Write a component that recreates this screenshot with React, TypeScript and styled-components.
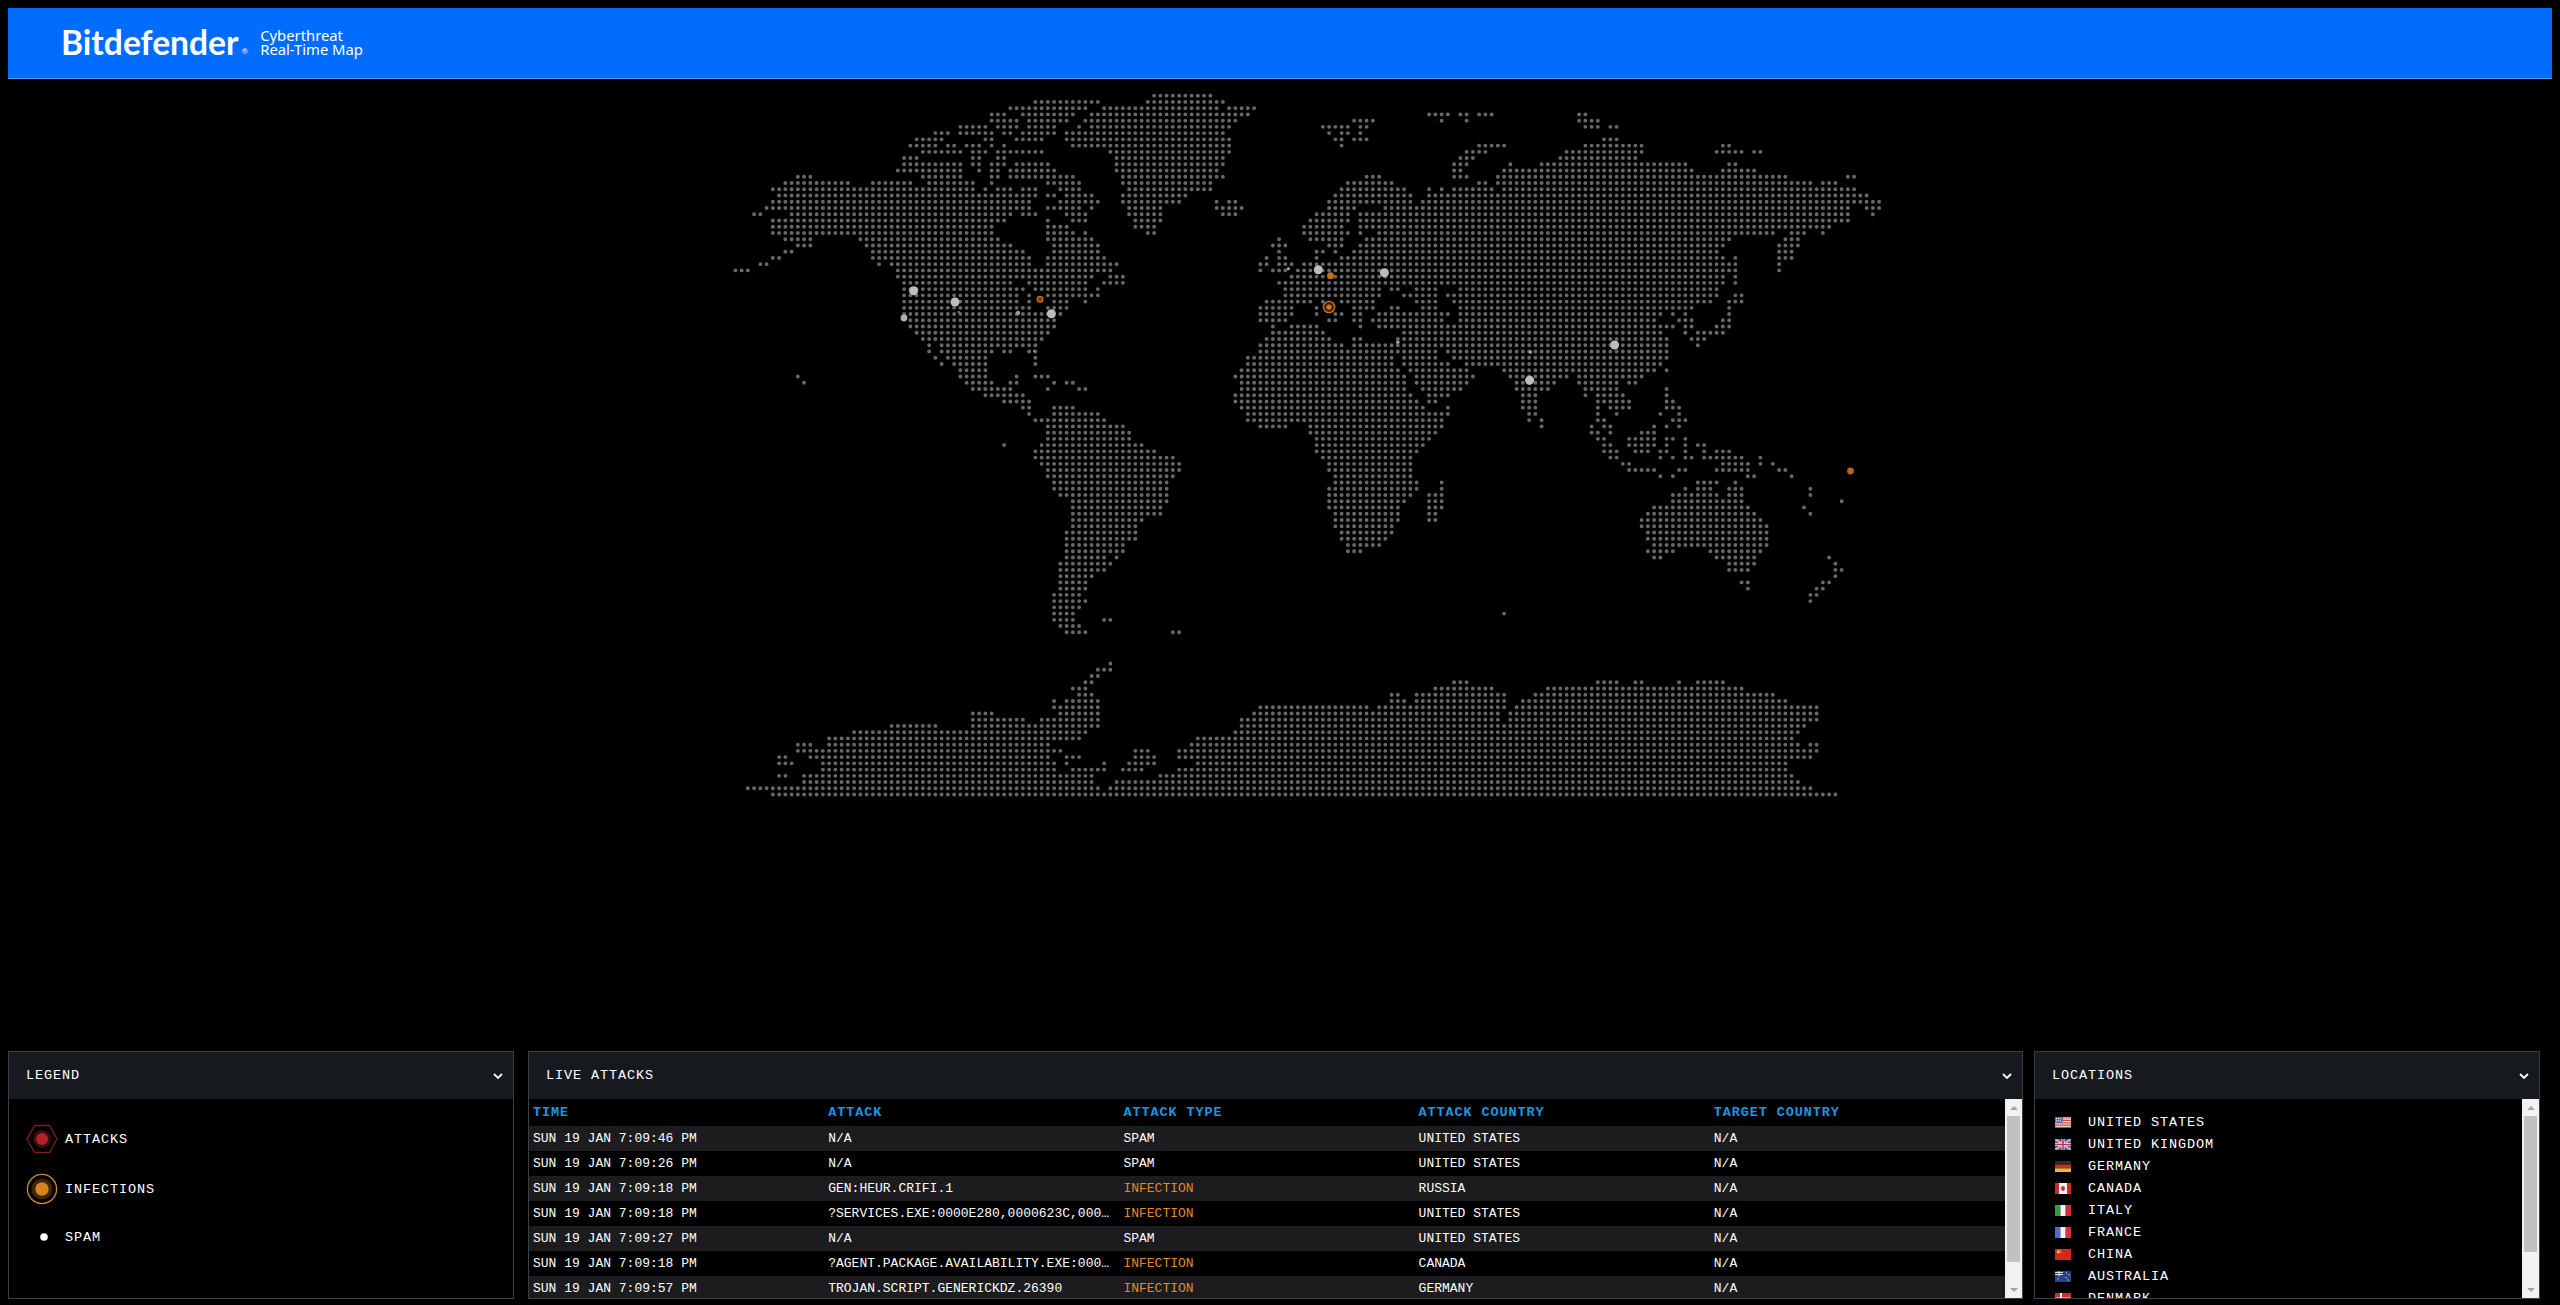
import React from "react";
import styled, { createGlobalStyle } from "styled-components";

const GlobalStyle = createGlobalStyle`
  html, body { margin: 0; padding: 0; background: #000; overflow: hidden; }
  #root { height: 1305px; }
`;

const Page = styled.div`
  box-sizing: border-box;
  height: 1305px;
  padding: 8px 8px 6px;
  display: flex;
  flex-direction: column;
  background: #000;
  color: #fff;
  font-family: "Liberation Mono", "Courier New", monospace;
`;

const TopBar = styled.header`
  flex: none;
  box-sizing: border-box;
  height: 71px;
  background: #006dff;
  border-bottom: 1px solid #4c97ff;
  display: flex;
  align-items: center;
  padding-left: 53px;
  padding-bottom: 2px;
`;

const Wordmark = styled.div`
  display: flex;
  align-items: flex-end;
  font-family: Lato, "Open Sans", sans-serif;
  font-weight: 700;
  font-size: 33.6px;
  line-height: 36px;
`;

const Registered = styled.span`
  font-size: 8px;
  line-height: 12px;
  font-weight: 400;
  margin-left: 3px;
  margin-bottom: 3px;
`;

const Tagline = styled.div`
  margin-left: 12px;
  font-family: "Noto Sans", sans-serif;
  font-size: 14.8px;
  line-height: 14.5px;
  font-weight: 400;
`;

const MapArea = styled.main`
  flex: 1;
  min-height: 0;
  padding: 9px 0 0 720px;
`;

const MapSvg = styled.svg`
  display: block;
`;

const Panels = styled.section`
  flex: none;
  height: 248px;
  display: flex;
`;

const Panel = styled.div<{ $width: number; $gap?: number }>`
  flex: none;
  box-sizing: border-box;
  width: ${(p) => p.$width}px;
  margin-left: ${(p) => p.$gap ?? 0}px;
  height: 248px;
  border: 1px solid #3b4048;
  display: flex;
  flex-direction: column;
  overflow: hidden;
`;

const PanelHead = styled.div`
  flex: none;
  height: 47px;
  box-sizing: border-box;
  background: #161a1f;
  display: flex;
  align-items: center;
  justify-content: space-between;
  padding: 0 10px 0 17px;
  font-size: 13.5px;
  letter-spacing: 0.9px;
`;

const Body = styled.div`
  flex: 1;
  min-height: 0;
  display: flex;
  overflow: hidden;
`;

const Content = styled.div`
  flex: 1;
  min-width: 0;
  overflow: hidden;
`;

const Rail = styled.div`
  flex: none;
  width: 17px;
  background: #f1f1f1;
  display: flex;
  flex-direction: column;
`;

const RailArrow = styled.div<{ $down?: boolean }>`
  flex: none;
  height: 17px;
  display: flex;
  align-items: center;
  justify-content: center;
  &::before {
    content: "";
    width: 0;
    height: 0;
    border-left: 4px solid transparent;
    border-right: 4px solid transparent;
    ${(p) => (p.$down ? "border-top: 4px solid #a3a3a3;" : "border-bottom: 4px solid #a3a3a3;")}
  }
`;

const RailTrack = styled.div`
  flex: 1;
  min-height: 0;
`;

const RailThumb = styled.div<{ $height: number }>`
  height: ${(p) => p.$height}px;
  margin: 0 2px;
  background: #c1c1c1;
`;

const LegendList = styled.div`
  flex: 1;
  display: grid;
  grid-template-rows: 50px 50px 46px;
  padding-top: 15px;
  box-sizing: border-box;
`;

const LegendRow = styled.div`
  display: flex;
  align-items: center;
  font-size: 13.5px;
  letter-spacing: 0.9px;
`;

const LegendIcon = styled.svg`
  display: block;
  margin: 0 7px 0 17px;
  flex: none;
`;

const TableRow = styled.div<{ $stripe?: boolean; $head?: boolean }>`
  display: grid;
  grid-template-columns: repeat(5, 1fr);
  height: ${(p) => (p.$head ? 27 : 25)}px;
  align-items: center;
  background: ${(p) => (p.$stripe ? "#1c1c1f" : "#000")};
  color: ${(p) => (p.$head ? "#1b96e6" : "#fff")};
  font-size: ${(p) => (p.$head ? 13.5 : 13)}px;
  letter-spacing: ${(p) => (p.$head ? "0.9px" : "0")};
  font-weight: ${(p) => (p.$head ? 700 : 400)};
`;

const Cell = styled.div<{ $tone?: "infection" }>`
  padding-left: 4px;
  white-space: nowrap;
  color: ${(p) => (p.$tone === "infection" ? "#e08a2c" : "inherit")};
`;

const LocationList = styled.ul`
  list-style: none;
  margin: 0;
  padding: 12px 0;
`;

const LocationItem = styled.li`
  height: 22px;
  display: flex;
  align-items: center;
  padding-left: 20px;
  font-size: 13.5px;
  letter-spacing: 0.9px;
`;

const Flag = styled.svg`
  display: block;
  flex: none;
  margin-right: 17px;
`;

const Chevron = () => (
  <svg width="10" height="8" viewBox="0 0 10 8" fill="none" stroke="#fff" strokeWidth="1.8">
    <path d="M1 2 L5 6 L9 2" />
  </svg>
);

const ScrollRail = ({ thumb }: { thumb: number }) => (
  <Rail>
    <RailArrow />
    <RailTrack>
      <RailThumb $height={thumb} />
    </RailTrack>
    <RailArrow $down />
  </Rail>
);

const RAW = `67-76
48-58 66-78
44-56 59-77 79-83
41-43 46-54 57-82 111-114 116-117 119-121 135-136
41-45 47-53 56-80 99-102 113 117 135-138
36-40 42-45 47-51 55 57-79 94-98 100-101 136-138 140-141
32-34 36-41 43-44 46-51 53-78 95 97-98 100
29-33 40-41 45-49 53-79 96-97 99-101 139-141
28-32 34-35 37-39 41 43 54-79 97 119-123 136-145 158-159
30-36 38-40 42-49 60-79 117-120 133-145 157-161 163-164
27-29 38-39 42-43 61-78 116-118 132-144
27-36 38-39 41-43 45-50 61-78 115-117 124 129-152 159-160
26-36 39 41-42 44-51 61-77 115-116 123-153 158-163
10-12 30-36 41-42 44-54 62-78 101-103 115-117 122-168 178-179
8-18 22-28 31-38 41 50-55 62-76 98-105 119-120 122-172 174-176
6-38 40 42-44 46-48 52-55 63-76 97-107 111 113 115-121 123-179
7-48 50-51 53-57 62-72 96-108 111-181
6-47 52-58 62-71 77 79-80 95-108 110-183
5-47 50-55 57 63-68 77-81 95-99 104-178 181-183
3-4 9-44 46-48 53-56 63-68 78-80 93-98 100-178 182
6-43 50 54-56 64-68 92-98 100-178
6-41 50-53 64-67 91-97 100-175
6-41 50-54 56 66-67 91-98 100 103-166 169-171 174
8-12 20-42 50-57 87 92-97 101-159 168-170
10-12 21-44 51-58 86-88 95-97 100-158 167-170
8-9 22-46 51-58 87 93-94 96 99-157 167-169
6-7 22-47 50-59 85 87-88 93 97-158 160 167-169
4-5 23 25-47 50-61 84-85 87-89 91-160 167
0-2 26-60 84 86-88 90-160 167
26-57 60-62 89-158 160
27-44 47-56 59-62 87-158 160
27-46 48-56 58 88-103 105-106 109-112 116-157
27-45 47 50-58 88-103 107-112 114-157 160-161
27-45 47 51-53 56 85-92 94 97-102 109-112 115-156 159-161
27-47 50-53 84-89 93 99-102 105-106 110-112 116-153 159
27-50 52 84-89 93 96-97 99-100 103-114 116-148 150 152 159
28-51 84-88 95-96 99-100 102-113 116-147 151-153 158-159
28-51 86 89-93 100 103-150 152-153 157-159
29-50 86-94 107-148 152 154-158
30-49 85-95 99-100 106-149 153-155
31 33-48 84-97 99-149 154
31 33-41 43-44 47-48 84-112 114-149
32 34-40 48 82-105 107-112 115-149
33 35-40 48 82-105 107-114 117-148
36-40 81-106 108-117 123-147 149
10 36-40 45 48-50 80-107 109-118 124-133 135-145
11 37-41 44-45 51 53-54 81-107 109-117 125-131 135-141 143-144
38-44 50 55-56 81-107 110-116 125-130 136-141 149
40-46 80-108 111-114 126-128 136 138-142 149
43-47 80-109 111-112 126-128 138-143 149-150
46-47 51-54 81-110 114 126-128 138 140-143 149-151
47 51-58 82-114 127-128 138 141 148 151
48-59 82-113 127 129 138-139 150-152
50-62 84-88 92-113 129 137 139-140 147 149 151
50-63 92-112 137-138 140 145-147
50-63 93-111 138-139 143-147 149-150 152
43 49-65 93-110 139-140 143-147 149 152 154-155
48-67 93-109 139-141 144-146 148-149 152 155 157-159
48-70 94-108 140-141 148 150 152-153 155-161 164
49-71 95-108 142-143 158-162 164 166
50-71 95-108 143-147 151-152 157-162 167-168
50-70 96-108 148 150 162-163 169
51-69 96-109 113 154-157 160
51-69 95-109 113 152 154-156 159-161 172
52-69 95-108 111-113 150-157 159-161 172
54-69 95-107 111-113 150-161 177
54-68 95-106 111-113 147-162 171
54-68 96-106 111-112 146-163 172
54-65 96-106 111-112 145-164
54-64 96-105 145-165
53-64 97-105 146-165
53-64 97-104 146-165
53-62 98-103 147-165
53-62 98-100 146-150 156-164
53-59 61 147-148 157-163 175
52-60 159-163 176
52-59 159-162 176-177
52-57 176
52-56 161-162 174-175
52-56 162 173-174
51-55 172-173
51-56 172
51-55
51-54 123
51-54 59-60
52-55
53-56 70-71




60
58-60
57-58
56-57 115-117 138-141 144-145 151 154-158
54-56 112-121 130-161
55-57 105-106 109-123 128-166
51 53-58 105-107 109-123 126-168
51-58 84-101 103-123 125-173
38-41 52-58 83-122 124-173
38-46 49-58 81-122 124-173
25-32 38-58 81-171
19-56 80-170
15-55 74-169
10-12 15-50 73-170 172-173
10-52 64-66 71-173
7-8 12-50 53-55 64-67 71-172
7-9 14-51 53 59 63-67 74-168
14-51 54-59 62-65 71-168
7-8 11-57 68-169
11-57 61-170
2-58 60-172
6-176`;

const dotPath = RAW.split("\n")
  .map((line, r) =>
    line
      .split(" ")
      .filter(Boolean)
      .map((run) => {
        const [a, b] = run.split("-").map(Number);
        const out: string[] = [];
        for (let c = a; c <= (b ?? a); c++) {
          out.push(`M${(735.36 + 6.25 * c).toFixed(2)} ${(95.67 + 6.24 * r).toFixed(2)}h0`);
        }
        return out.join("");
      })
      .join("")
  )
  .join("");

const SPAM: [number, number, number, string][] = [
  [913.6, 290.7, 4.5, "#bdbdbd"],
  [955, 302, 4.5, "#bdbdbd"],
  [904, 318, 3.4, "#b0b0b0"],
  [1051.4, 313.7, 4.5, "#bdbdbd"],
  [1018, 313, 2.2, "#9a9a9a"],
  [958.6, 312, 1, "#9a9a9a"],
  [1034, 351, 1, "#9a9a9a"],
  [1318.3, 269.7, 4.5, "#bdbdbd"],
  [1384.4, 272.7, 4.5, "#bdbdbd"],
  [1288.4, 268.7, 1.6, "#a0a0a0"],
  [1397.8, 342.3, 1.8, "#a0a0a0"],
  [1530.4, 352, 1.8, "#a0a0a0"],
  [1614.6, 345, 4.5, "#bdbdbd"],
  [1529.6, 380.3, 4.5, "#bdbdbd"],
];

const WorldMap = () => (
  <MapSvg width="1160" height="720" viewBox="728 88 1160 720">
    <path d={dotPath} stroke="#686868" strokeWidth="3.9" strokeLinecap="round" fill="none" />
    {SPAM.map(([x, y, r, fill]) => (
      <circle key={`${x}-${y}`} cx={x} cy={y} r={r} fill={fill} />
    ))}
    <circle cx="1040" cy="299.3" r="2.9" fill="#7a3f10" stroke="#c96f1e" strokeWidth="1.2" />
    <circle cx="1330.5" cy="275.7" r="3.4" fill="#c4701f" />
    <circle cx="1850.5" cy="471" r="3.4" fill="#b5661c" />
    <circle cx="1329" cy="307" r="5.6" fill="#3c1e06" stroke="#c8752a" strokeWidth="1.4" />
    <circle cx="1329" cy="307" r="2.6" fill="#d9772a" />
  </MapSvg>
);

type FlagKind = "us" | "gb" | "de" | "ca" | "it" | "fr" | "cn" | "au" | "dk";

const FLAG_ART: Record<FlagKind, React.ReactNode> = {
  us: (
    <>
      <rect width="16" height="11" fill="#eee" />
      <path d="M0 1h16M0 3.4h16M0 5.8h16M0 8.2h16M0 10.4h16" stroke="#d4453e" strokeWidth="1.2" />
      <rect width="8" height="5.6" fill="#5a6fc4" />
      <path d="M1 1.5h6M1 3.8h6" stroke="#fff" strokeWidth="0.9" strokeDasharray="1 1" />
    </>
  ),
  gb: (
    <>
      <rect width="16" height="11" fill="#3d4f9e" />
      <path d="M0 0L16 11M16 0L0 11" stroke="#eee" strokeWidth="2" />
      <path d="M0 0L16 11M16 0L0 11" stroke="#c8303a" strokeWidth="0.7" />
      <path d="M8 0V11M0 5.5H16" stroke="#eee" strokeWidth="3" />
      <path d="M8 0V11M0 5.5H16" stroke="#c8303a" strokeWidth="1.6" />
    </>
  ),
  de: (
    <>
      <rect width="16" height="3.7" fill="#2b2b2b" />
      <rect y="3.7" width="16" height="3.7" fill="#c8302a" />
      <rect y="7.4" width="16" height="3.6" fill="#e8b93a" />
    </>
  ),
  ca: (
    <>
      <rect width="16" height="11" fill="#f2f2f2" />
      <rect width="4" height="11" fill="#cf2a2a" />
      <rect x="12" width="4" height="11" fill="#cf2a2a" />
      <path d="M8 2.4l1 1.5 1-.3-.4 2 .8.3-1.6 1.3.1.9H7.1l.1-.9L5.6 5.9l.8-.3-.4-2 1 .3z" fill="#cf2a2a" />
    </>
  ),
  it: (
    <>
      <rect width="5.4" height="11" fill="#2f9a47" />
      <rect x="5.4" width="5.3" height="11" fill="#f4f4f4" />
      <rect x="10.7" width="5.3" height="11" fill="#d0303a" />
    </>
  ),
  fr: (
    <>
      <rect width="5.4" height="11" fill="#4c6cc8" />
      <rect x="5.4" width="5.3" height="11" fill="#f4f4f4" />
      <rect x="10.7" width="5.3" height="11" fill="#d8343c" />
    </>
  ),
  cn: (
    <>
      <rect width="16" height="11" fill="#d4281f" />
      <rect x="2" y="1.5" width="2.6" height="2.6" fill="#f5d43a" />
      <rect x="5" y="0.8" width="1" height="1" fill="#f5d43a" />
      <rect x="5.6" y="3" width="1" height="1" fill="#f5d43a" />
    </>
  ),
  au: (
    <>
      <rect width="16" height="11" fill="#2b3f8f" />
      <path d="M0 1.5h8M0 3.5h8M4 0v5.5" stroke="#d9d9e8" strokeWidth="1" />
      <path d="M2.5 8h1M11 2h1M13.5 4h1M10.5 6.5h1M12.5 9h1" stroke="#fff" strokeWidth="1.1" />
    </>
  ),
  dk: (
    <>
      <rect width="16" height="11" fill="#d02a35" />
      <path d="M6 0V11M0 5.5H16" stroke="#f2f2f2" strokeWidth="2" />
    </>
  ),
};

const LOCATIONS: [FlagKind, string][] = [
  ["us", "UNITED STATES"],
  ["gb", "UNITED KINGDOM"],
  ["de", "GERMANY"],
  ["ca", "CANADA"],
  ["it", "ITALY"],
  ["fr", "FRANCE"],
  ["cn", "CHINA"],
  ["au", "AUSTRALIA"],
  ["dk", "DENMARK"],
];

const ATTACKS: [string, string, string, string, string][] = [
  ["SUN 19 JAN 7:09:46 PM", "N/A", "SPAM", "UNITED STATES", "N/A"],
  ["SUN 19 JAN 7:09:26 PM", "N/A", "SPAM", "UNITED STATES", "N/A"],
  ["SUN 19 JAN 7:09:18 PM", "GEN:HEUR.CRIFI.1", "INFECTION", "RUSSIA", "N/A"],
  ["SUN 19 JAN 7:09:18 PM", "?SERVICES.EXE:0000E280,0000623C,000…", "INFECTION", "UNITED STATES", "N/A"],
  ["SUN 19 JAN 7:09:27 PM", "N/A", "SPAM", "UNITED STATES", "N/A"],
  ["SUN 19 JAN 7:09:18 PM", "?AGENT.PACKAGE.AVAILABILITY.EXE:000…", "INFECTION", "CANADA", "N/A"],
  ["SUN 19 JAN 7:09:57 PM", "TROJAN.SCRIPT.GENERICKDZ.26390", "INFECTION", "GERMANY", "N/A"],
];

const HEADINGS = ["TIME", "ATTACK", "ATTACK TYPE", "ATTACK COUNTRY", "TARGET COUNTRY"];

export default function App() {
  return (
    <Page>
      <GlobalStyle />
      <TopBar>
        <Wordmark>
          <span>Bitdefender</span>
          <Registered>®</Registered>
        </Wordmark>
        <Tagline>
          Cyberthreat
          <br />
          Real-Time Map
        </Tagline>
      </TopBar>
      <MapArea>
        <WorldMap />
      </MapArea>
      <Panels>
        <Panel $width={506}>
          <PanelHead>
            LEGEND
            <Chevron />
          </PanelHead>
          <Body>
            <LegendList>
              <LegendRow>
                <LegendIcon width="32" height="30" viewBox="0 0 32 30">
                  <path d="M8.5 1.5H23.5L31 15L23.5 28.5H8.5L1 15Z" fill="none" stroke="#7c1d20" strokeWidth="1.3" />
                  <circle cx="16" cy="15" r="9" fill="#3c0c0e" />
                  <circle cx="16" cy="15" r="6" fill="#b3212a" />
                </LegendIcon>
                ATTACKS
              </LegendRow>
              <LegendRow>
                <LegendIcon width="32" height="32" viewBox="0 0 32 32">
                  <circle cx="16" cy="16" r="14.6" fill="none" stroke="#d28a30" strokeWidth="1.3" />
                  <circle cx="16" cy="16" r="10.5" fill="#3d2606" />
                  <circle cx="16" cy="16" r="6.7" fill="#d5851b" />
                </LegendIcon>
                INFECTIONS
              </LegendRow>
              <LegendRow>
                <LegendIcon width="32" height="10" viewBox="0 0 32 10">
                  <circle cx="18" cy="5" r="3.8" fill="#fff" />
                </LegendIcon>
                SPAM
              </LegendRow>
            </LegendList>
          </Body>
        </Panel>
        <Panel $width={1495} $gap={14}>
          <PanelHead>
            LIVE ATTACKS
            <Chevron />
          </PanelHead>
          <Body>
            <Content>
              <TableRow $head>
                {HEADINGS.map((h) => (
                  <Cell key={h}>{h}</Cell>
                ))}
              </TableRow>
              {ATTACKS.map((row, i) => (
                <TableRow key={i} $stripe={i % 2 === 0}>
                  <Cell>{row[0]}</Cell>
                  <Cell>{row[1]}</Cell>
                  <Cell $tone={row[2] === "INFECTION" ? "infection" : undefined}>{row[2]}</Cell>
                  <Cell>{row[3]}</Cell>
                  <Cell>{row[4]}</Cell>
                </TableRow>
              ))}
            </Content>
            <ScrollRail thumb={146} />
          </Body>
        </Panel>
        <Panel $width={506} $gap={11}>
          <PanelHead>
            LOCATIONS
            <Chevron />
          </PanelHead>
          <Body>
            <Content>
              <LocationList>
                {LOCATIONS.map(([kind, name]) => (
                  <LocationItem key={name}>
                    <Flag width="16" height="11" viewBox="0 0 16 11">
                      {FLAG_ART[kind]}
                    </Flag>
                    {name}
                  </LocationItem>
                ))}
              </LocationList>
            </Content>
            <ScrollRail thumb={136} />
          </Body>
        </Panel>
      </Panels>
    </Page>
  );
}
